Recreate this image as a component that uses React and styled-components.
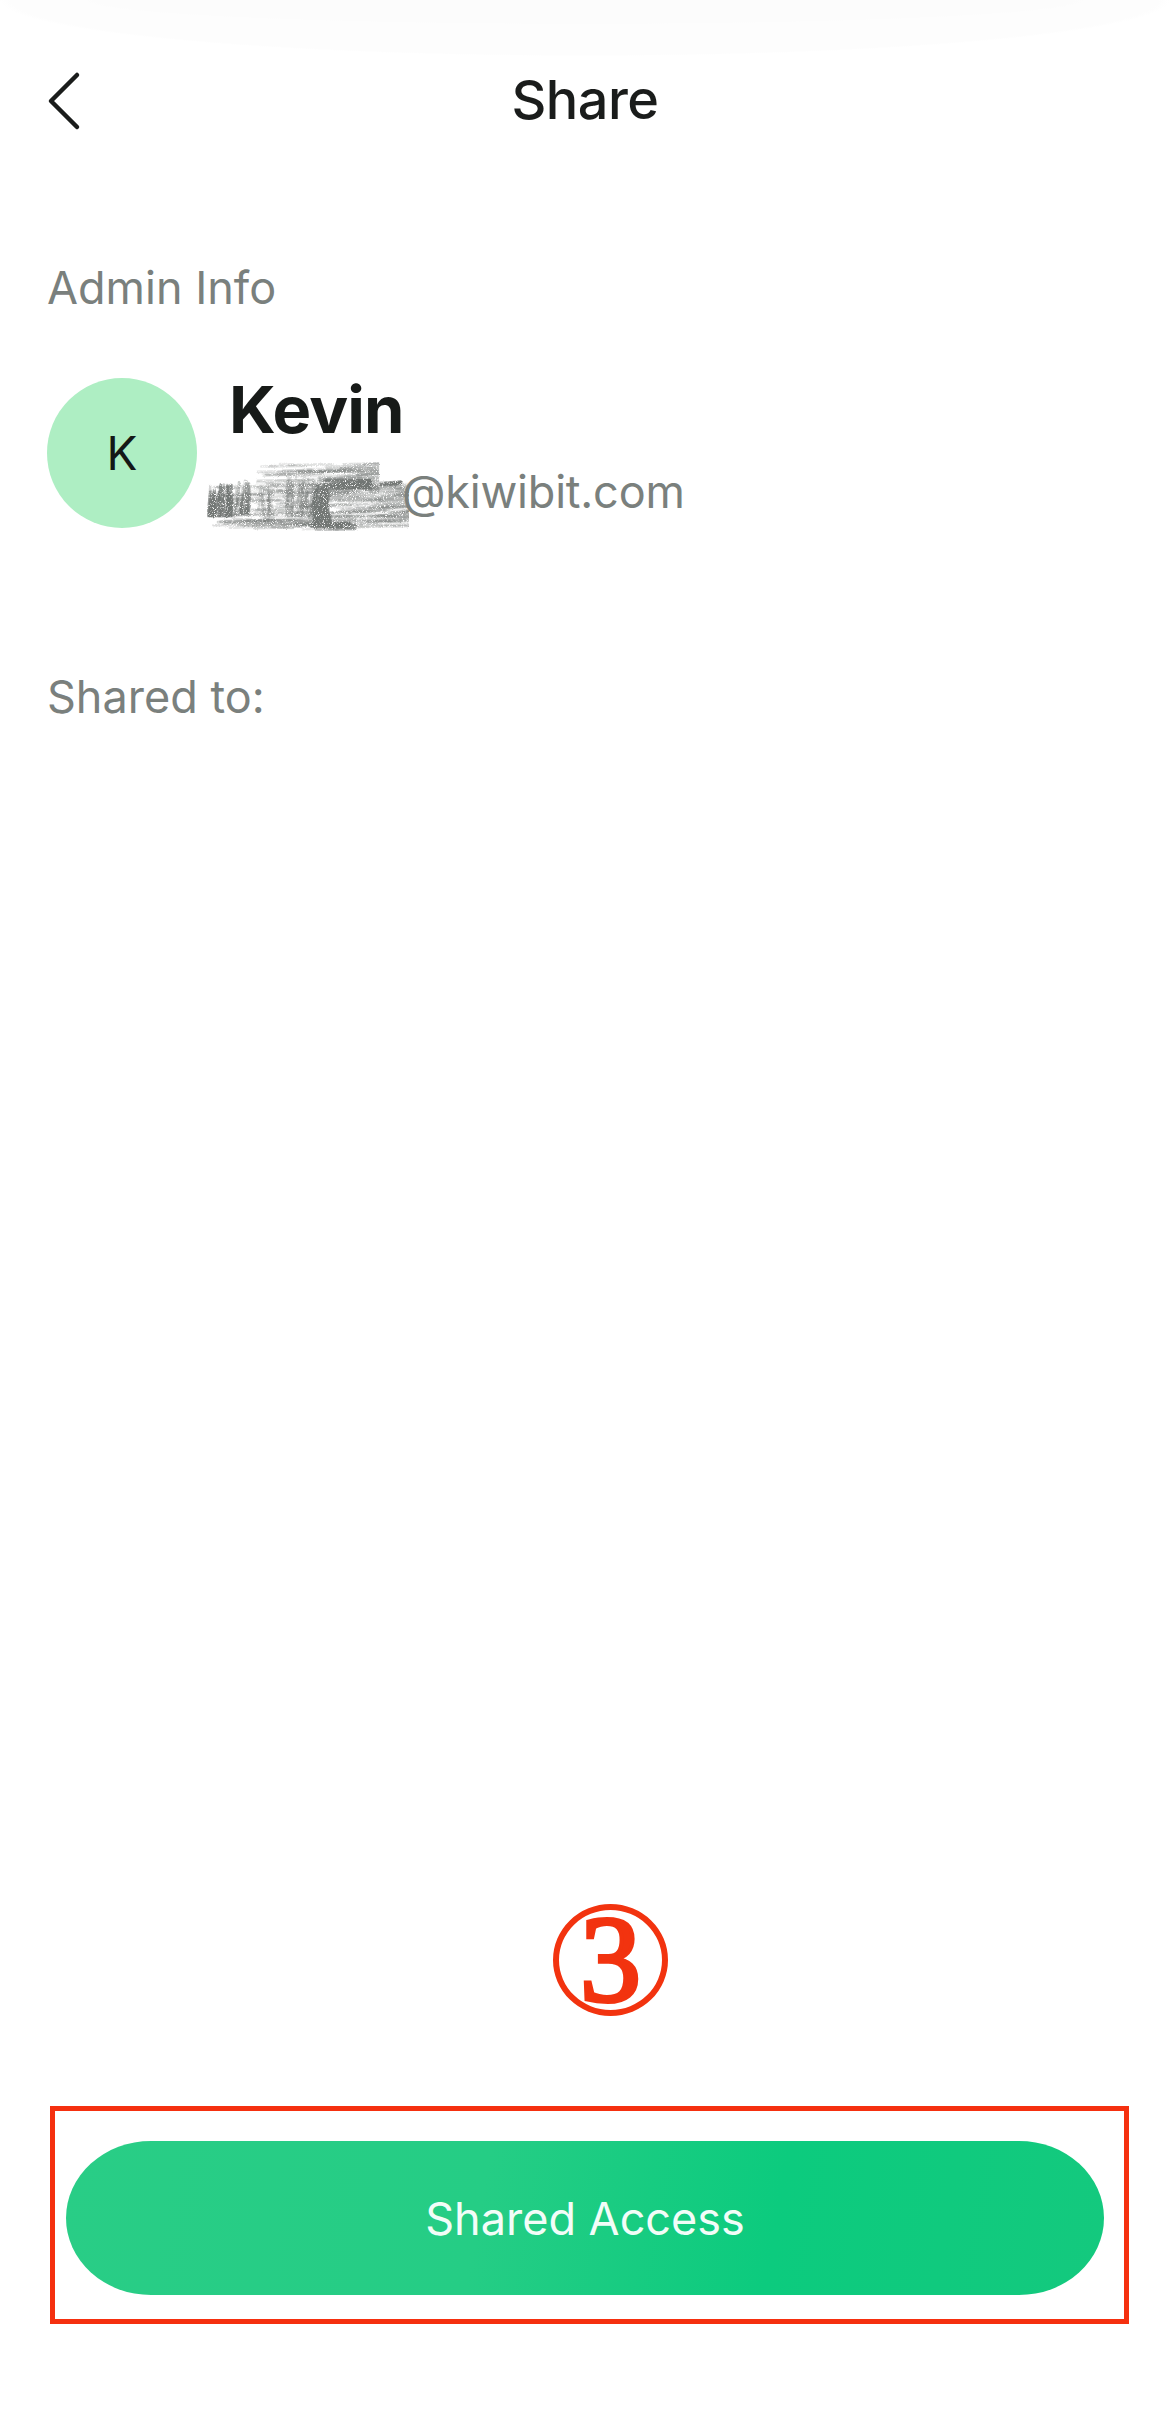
import React from "react";
import styled, { createGlobalStyle } from "styled-components";

const Global = createGlobalStyle`
  html, body { margin: 0; padding: 0; background: #fff; }
  * { box-sizing: border-box; }
`;

const Page = styled.div`
  width: 1170px;
  height: 2427px;
  display: flex;
  flex-direction: column;
  overflow: hidden;
  font-family: Inter, "Liberation Sans", sans-serif;
  background:
    radial-gradient(ellipse 500px 24px at 50% 0, #fcfcfc 98%, transparent 100%),
    radial-gradient(ellipse 585px 56px at 50% 0, #fdfdfd 98%, transparent 100%),
    #fff;
`;

const Header = styled.header`
  height: 200px;
  padding: 0 48px;
  display: grid;
  grid-template-columns: 30px 1fr 30px;
  align-items: center;
`;

const Title = styled.h1`
  margin: 0;
  text-align: center;
  font-size: 54px;
  font-weight: 500;
  line-height: 60px;
  letter-spacing: -0.5px;
  color: #1a1c1b;
`;

const BackIcon = styled.svg`
  display: block;
  width: 30px;
  height: 56px;
  overflow: visible;
  fill: none;
  stroke: #1a1c1b;
  stroke-width: 4.5;
  stroke-linecap: round;
  stroke-linejoin: round;
`;

const Content = styled.main`
  padding: 63px 47px 0;
  display: flex;
  flex-direction: column;
  flex: 1;
`;

const Label = styled.div`
  font-size: 45px;
  font-weight: 400;
  line-height: 50px;
  color: #7a807d;
`;

const AdminRow = styled.div`
  margin-top: 65px;
  display: flex;
  align-items: flex-start;
  gap: 32px;
  margin-bottom: 144px;
`;

const Avatar = styled.div`
  width: 150px;
  height: 150px;
  border-radius: 50%;
  background: #aeeec3;
  color: #141816;
  display: flex;
  align-items: center;
  justify-content: center;
  font-size: 46px;
  font-weight: 400;
`;

const AdminText = styled.div`
  display: flex;
  flex-direction: column;
  height: 150px;
`;

const Name = styled.div`
  font-size: 65px;
  font-weight: 700;
  line-height: 72px;
  letter-spacing: -0.8px;
  color: #171a18;
  margin-top: -4px;
`;

const EmailRow = styled.div`
  display: flex;
  align-items: flex-start;
  margin-left: -29px;
  margin-top: 4px;
`;

const Scribble = styled.svg`
  display: block;
  width: 220px;
  height: 90px;
  margin-right: -18px;
  flex: none;
`;

const Email = styled.span`
  font-size: 45px;
  line-height: 50px;
  letter-spacing: -0.2px;
  margin-top: 17px;
  color: #7a807d;
`;

const Footer = styled.footer`
  padding: 0 41px 103px 50px;
  display: flex;
  flex-direction: column;
`;

const StepMark = styled.div`
  margin-left: 503px;
  margin-bottom: 90px;
  width: 115px;
  height: 112px;
  border: 6px solid #f2330f;
  border-radius: 50%;
  display: flex;
  align-items: center;
  justify-content: center;
  font-family: "Liberation Serif", serif;
  font-size: 122px;
  font-weight: 400;
  line-height: 1;
  color: #f2330f;
  -webkit-text-stroke: 4px #f2330f;
`;

const Frame = styled.div`
  height: 218px;
  border: 5px solid #f5300f;
  padding: 30px 20px 24px 11px;
  display: flex;
`;

const AccessButton = styled.button`
  flex: 1;
  border: 0;
  border-radius: 85px / 77px;
  background: linear-gradient(100deg, #29cd86 0%, #25cd85 40%, #0ccb7e 68%, #14c97e 100%);
  color: #f2fdf8;
  font-family: inherit;
  font-size: 45px;
  font-weight: 400;
  padding: 0;
`;

/* Pencil scratches that hide part of the address: repeatable pseudo-random strokes. */
const random = (() => {
  let s = 71;
  return () => {
    s = (s * 16807) % 2147483647;
    return s / 2147483647;
  };
})();

const patches = [
  // x, y, w, h, count, opacity, vertical
  [10, 34, 195, 44, 190, 0.2, false],
  [55, 14, 120, 30, 90, 0.2, false],
  [12, 70, 140, 10, 30, 0.24, false],
  [170, 38, 36, 30, 30, 0.2, false],
  [10, 34, 24, 30, 90, 0.5, true],
  [36, 30, 14, 32, 40, 0.36, true],
  [60, 30, 14, 40, 16, 0.2, true],
  [86, 26, 30, 38, 44, 0.28, true],
  [114, 34, 16, 38, 80, 0.62, true],
  [120, 30, 48, 10, 44, 0.5, false],
  [110, 73, 36, 4, 20, 0.6, false],
  [176, 32, 22, 3, 8, 0.55, false],
];

const strokes = patches.flatMap(([x, y, w, h, count, opacity, vertical], p) =>
  Array.from({ length: count }, (_, i) => {
    const x1 = x + random() * w;
    const y1 = y + random() * h;
    const len = vertical ? 8 + random() * h * 0.7 : 14 + random() * 50;
    return {
      key: `${p}-${i}`,
      x1,
      y1,
      x2: vertical ? x1 - 3 + random() * 4 : Math.min(x1 + len, x + w + 3),
      y2: vertical ? Math.min(y1 + len, y + h + 2) : y1 - len * 0.04 + random() * 2,
      opacity: opacity * (0.6 + random() * 0.8),
    };
  })
);

const ScribbleDrawing = () => (
  <Scribble viewBox="0 0 220 90">
    <defs>
      <filter id="grain" x="0" y="0" width="100%" height="100%">
        <feTurbulence type="fractalNoise" baseFrequency="1.1" numOctaves="2" seed="4" result="n" />
        <feColorMatrix in="n" type="matrix" values="0 0 0 0 0  0 0 0 0 0  0 0 0 0 0  0 0 0 -5 3.8" result="mask" />
        <feDisplacementMap in="SourceGraphic" in2="n" scale="3" result="d" />
        <feComposite in="d" in2="mask" operator="in" result="c" />
        <feGaussianBlur in="c" stdDeviation="0.45" />
      </filter>
    </defs>
    <g filter="url(#grain)" stroke="#727674" strokeWidth="2.6" strokeLinecap="round">
      {strokes.map(({ key, ...line }) => (
        <line key={key} {...line} />
      ))}
    </g>
  </Scribble>
);

export default function App() {
  return (
    <Page>
      <Global />
      <Header>
        <BackIcon viewBox="0 0 30 56">
          <path d="M29 3 L3 29 L29 55" />
        </BackIcon>
        <Title>Share</Title>
      </Header>
      <Content>
        <Label>Admin Info</Label>
        <AdminRow>
          <Avatar>K</Avatar>
          <AdminText>
            <Name>Kevin</Name>
            <EmailRow>
              <ScribbleDrawing />
              <Email>@kiwibit.com</Email>
            </EmailRow>
          </AdminText>
        </AdminRow>
        <Label>Shared to:</Label>
      </Content>
      <Footer>
        <StepMark>3</StepMark>
        <Frame>
          <AccessButton>Shared Access</AccessButton>
        </Frame>
      </Footer>
    </Page>
  );
}
